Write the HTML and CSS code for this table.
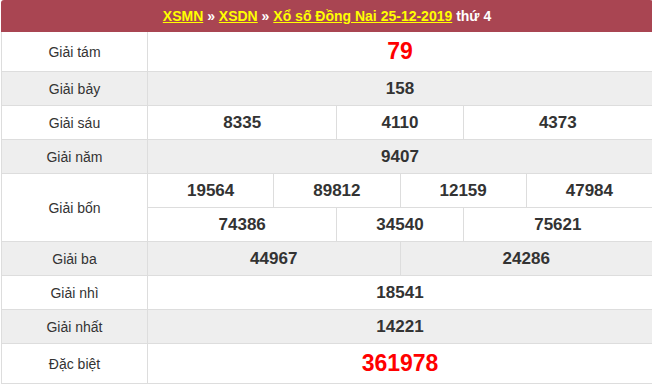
FILE: index.html
```html
<!DOCTYPE html>
<html lang="vi">
<head>
    <meta charset="UTF-8">
    <meta name="viewport" content="width=device-width, initial-scale=1.0">
    <title>Xổ số Đồng Nai 25-12-2019</title>
    <link rel="stylesheet" href="styles.css">
</head>
<body>

    <!-- bảng kết quả -->
    <div class="box">
        <h2 class="title">
            <a href="#">XSMN</a> » <a href="#">XSDN</a> » <a href="#">Xổ số Đồng Nai 25-12-2019</a> thứ 4
        </h2>

        <table class="result">
            <colgroup>
                <col class="col-name">
                <col><col><col><col><col><col><col><col>
            </colgroup>
            <tr class="big">
                <td class="name">Giải tám</td>
                <td colspan="8" class="num red">79</td>
            </tr>
            <tr class="alt">
                <td class="name">Giải bảy</td>
                <td colspan="8" class="num">158</td>
            </tr>
            <tr>
                <td class="name">Giải sáu</td>
                <td colspan="3" class="num">8335</td>
                <td colspan="2" class="num">4110</td>
                <td colspan="3" class="num">4373</td>
            </tr>
            <tr class="alt">
                <td class="name">Giải năm</td>
                <td colspan="8" class="num">9407</td>
            </tr>
            <tr>
                <td class="name" rowspan="2">Giải bốn</td>
                <td colspan="2" class="num">19564</td>
                <td colspan="2" class="num">89812</td>
                <td colspan="2" class="num">12159</td>
                <td colspan="2" class="num">47984</td>
            </tr>
            <tr>
                <td colspan="3" class="num">74386</td>
                <td colspan="2" class="num">34540</td>
                <td colspan="3" class="num">75621</td>
            </tr>
            <tr class="alt">
                <td class="name">Giải ba</td>
                <td colspan="4" class="num">44967</td>
                <td colspan="4" class="num">24286</td>
            </tr>
            <tr>
                <td class="name">Giải nhì</td>
                <td colspan="8" class="num">18541</td>
            </tr>
            <tr class="alt">
                <td class="name">Giải nhất</td>
                <td colspan="8" class="num">14221</td>
            </tr>
            <tr class="big">
                <td class="name">Đặc biệt</td>
                <td colspan="8" class="num red">361978</td>
            </tr>
        </table>
    </div>

</body>
</html>
```

FILE: styles.css
```css
body {
    font-family: "Liberation Sans", Arial, sans-serif;
    margin: 0;
    padding: 0 0 0 1px;
    background-color: #fff;
    color: #333;
}
.box {
    width: 652px;
}
.title {
    margin: 0;
    height: 32px;
    line-height: 32px;
    font-size: 14px;
    font-weight: bold;
    text-align: center;
    color: #fff;
    background-color: #a94552;
    border-radius: 3px 3px 0 0;
}
.title a {
    color: #ff0;
    text-decoration: underline;
}
.result {
    width: 652px;
    border-collapse: collapse;
    table-layout: fixed;
}
.col-name {
    width: 146px;
}
.result td {
    border: 1px solid #ddd;
    border-top: none;
    height: 33px;
    padding: 0;
    text-align: center;
    vertical-align: middle;
}
.result .big td {
    height: 39px;
}
.result .alt td {
    background-color: #eee;
}
.name {
    font-size: 14px;
    color: #333;
}
.num {
    font-size: 17px;
    font-weight: bold;
    color: #333;
}
.num.red {
    font-size: 23px;
    color: #f00;
}
```
